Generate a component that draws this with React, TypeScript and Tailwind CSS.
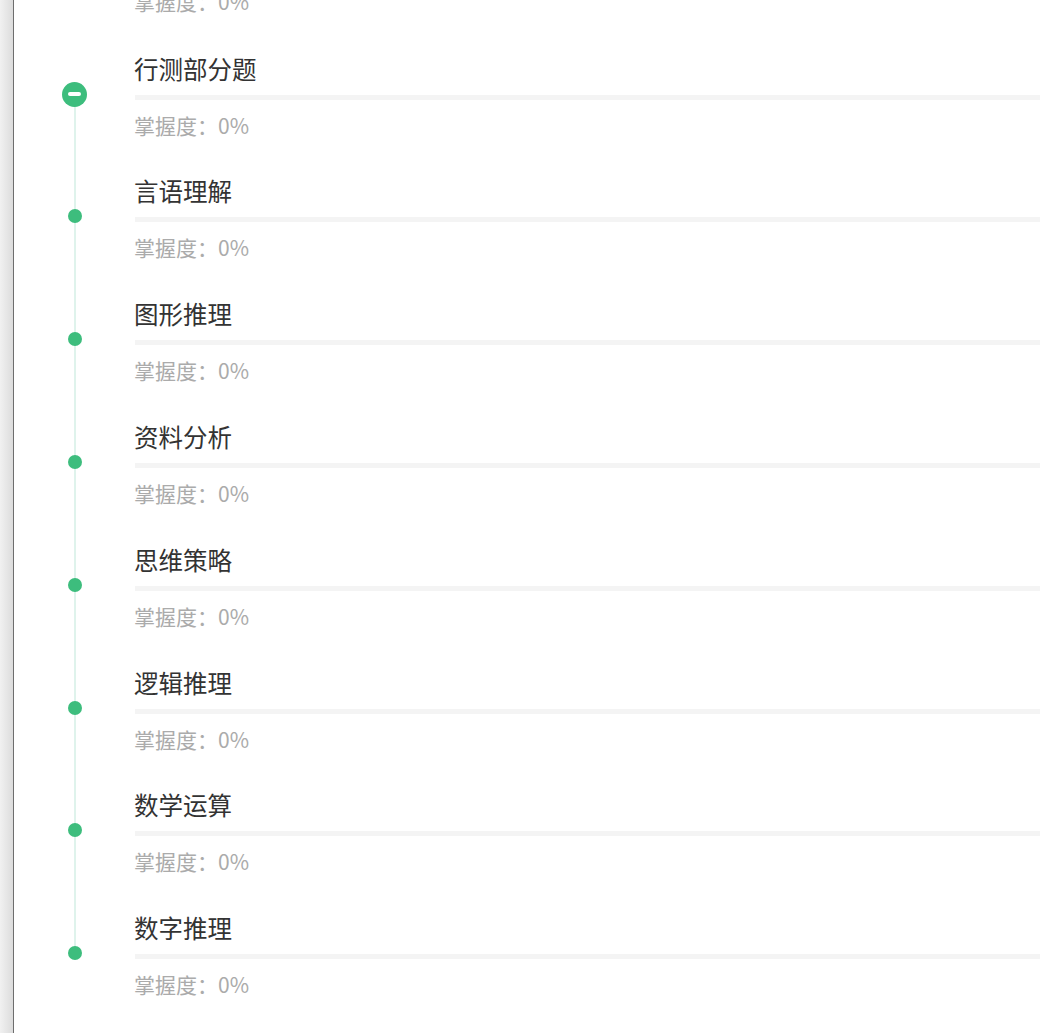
import React from "react"

const topics = ["言语理解", "图形推理", "资料分析", "思维策略", "逻辑推理", "数学运算", "数字推理"]

function Item({ title, head }: { title: string; head?: boolean }) {
  return (
    <div className="flex h-[122.8px]">
      <div className={head ? "flex w-[121px] shrink-0 justify-center pt-[29px]" : "flex w-[121px] shrink-0 justify-center pt-[34px]"}>
        {head ? (
          <div className="relative flex h-[25px] w-[25px] items-center justify-center rounded-full bg-[#3dbd7d]">
            <div className="h-[4px] w-[13px] rounded-full bg-white" />
          </div>
        ) : (
          <div className="relative h-[14px] w-[14px] rounded-full bg-[#3dbd7d]" />
        )}
      </div>
      <div className="flex min-w-0 flex-1 flex-col">
        <div className="-ml-px h-[32px] text-[24.5px] leading-[32px] text-[#333333]">{title}</div>
        <div className="mt-[10px] h-[5px] w-full bg-[#f4f4f4]" />
        <div className="-ml-px mt-[11px] h-[28px] text-[21px] leading-[28px] text-[#ababab]">掌握度：0%</div>
      </div>
    </div>
  )
}

export default function App() {
  return (
    <div
      className="flex h-[1033px] w-[1040px] overflow-hidden bg-white"
      style={{ fontFamily: '"Noto Sans CJK SC", "Noto Sans", sans-serif' }}
    >
      <div className="w-[13px] shrink-0 bg-gradient-to-r from-[#f1f1f1] to-[#dcdcdc]" />
      <div className="w-px shrink-0 bg-[#6e6e6e]" />
      <div className="flex min-w-0 flex-1 flex-col">
        <div className="-mt-[13.5px] h-[28px] shrink-0 pl-[120px] text-[21px] leading-[28px] text-[#ababab]">
          掌握度：0%
        </div>
        <div className="relative mt-[38.2px] shrink-0">
          <div className="absolute left-[59.5px] top-[42px] h-[859px] w-[2px] bg-[#dff3ec]" />
          <Item title="行测部分题" head />
          {topics.map((t) => (
            <Item key={t} title={t} />
          ))}
        </div>
      </div>
    </div>
  )
}
